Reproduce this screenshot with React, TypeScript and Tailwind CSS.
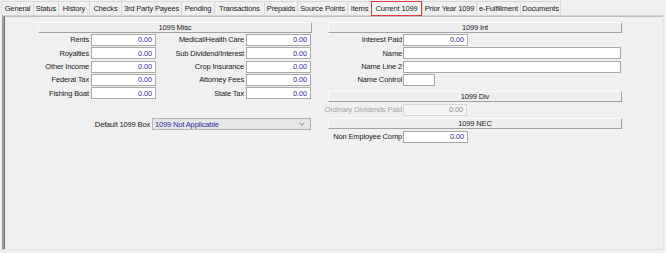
import React from 'react';

interface Tab {
  label: string;
  w: number;
  active?: boolean;
}

const tabs: Tab[] = [
  { label: 'General', w: 32 },
  { label: 'Status', w: 25 },
  { label: 'History', w: 31 },
  { label: 'Checks', w: 32 },
  { label: '3rd Party Payees', w: 60 },
  { label: 'Pending', w: 33 },
  { label: 'Transactions', w: 50 },
  { label: 'Prepaids', w: 33 },
  { label: 'Source Points', w: 50 },
  { label: 'Items', w: 24 },
  { label: 'Current 1099', w: 51, active: true },
  { label: 'Prior Year 1099', w: 54 },
  { label: 'e-Fulfillment', w: 44 },
  { label: 'Documents', w: 41 },
];

const miscRows: [string, string][] = [
  ['Rents', 'Medical/Health Care'],
  ['Royalties', 'Sub Dividend/Interest'],
  ['Other Income', 'Crop Insurance'],
  ['Federal Tax', 'Attorney Fees'],
  ['Fishing Boat', 'State Tax'],
];

function Header({ title }: { title: string }) {
  return (
    <div className="h-[11px] flex items-center justify-center bg-[#eeeeee] border border-t-[#fbfbfb] border-l-[#fbfbfb] border-r-[#a3a3a3] border-b-[#a3a3a3] text-[#1a1a1a]">
      {title}
    </div>
  );
}

function NumBox({ value = '0.00', className = 'w-[65px]' }: { value?: string; className?: string }) {
  return (
    <div className={`${className} h-[12px] bg-white border border-[#a9a9a9] flex items-center justify-end pr-[3px] text-[#2e2ea6]`}>
      {value}
    </div>
  );
}

function Label({ text, className = '' }: { text: string; className?: string }) {
  return <span className={`${className} flex justify-end whitespace-nowrap pr-[1px]`}>{text}</span>;
}

export default function App() {
  return (
    <div className="w-[666px] h-[253px] bg-[#f0f0f0] font-['Liberation_Sans',Arial,sans-serif] text-[7.5px] leading-none tracking-[-0.15px] text-[#1a1a1a] overflow-hidden">
      {/* tab strip */}
      <div className="flex h-[15px] items-end pl-[1px]">
        {tabs.map((t) =>
          t.active ? (
            <div
              key={t.label}
              style={{ width: t.w }}
              className="h-[15px] -mb-[1px] relative z-10 flex items-center justify-center bg-[#f7f7f7] border border-[#e0393e]"
            >
              {t.label}
            </div>
          ) : (
            <div
              key={t.label}
              style={{ width: t.w }}
              className="h-[14px] flex items-center justify-center bg-[#f0f0f0] border-t border-l border-[#d9d9d9] last:border-r"
            >
              {t.label}
            </div>
          )
        )}
      </div>

      {/* panel */}
      <div className="mx-[2px] h-[235px] border-t border-[#d4d4d4] border-r border-r-[#e3e3e3] border-b border-b-[#e3e3e3] border-l-2 border-l-[#a0a0a0]">
        <div className="h-full border-l border-[#6d6d6d] border-t border-t-[#bdbdbd] flex gap-[16px] pl-[33px] pt-[5px]">
          {/* 1099 Misc */}
          <div className="w-[274px] flex flex-col">
            <Header title="1099 Misc" />
            <div className="mt-[1px] flex flex-col gap-[1.33px]">
              {miscRows.map(([a, b]) => (
                <div key={a} className="flex items-center h-[12px]">
                  <Label text={a} className="w-[52px]" />
                  <div className="ml-[1px]">
                    <NumBox />
                  </div>
                  <Label text={b} className="w-[89px]" />
                  <div className="ml-[1px]">
                    <NumBox />
                  </div>
                </div>
              ))}
            </div>
            <div className="mt-[19px] flex items-center h-[12px]">
              <Label text="Default 1099 Box" className="w-[113px]" />
              <div className="ml-[1px] w-[159px] h-[12px] bg-[#e6e6e6] border border-[#b4b4b4] flex items-center pl-[2px] pr-[5px] text-[#2e2ea6]">
                <span className="flex-1">1099 Not Applicable</span>
                <svg width="6" height="4" viewBox="0 0 6 4" fill="none">
                  <path d="M0.5 0.8 L3 3.2 L5.5 0.8" stroke="#6a6a6a" strokeWidth="0.8" />
                </svg>
              </div>
            </div>
          </div>

          {/* right column */}
          <div className="w-[294px] flex flex-col">
            <Header title="1099 Int" />
            <div className="mt-[1px] flex flex-col gap-[1.33px]">
              <div className="flex items-center h-[12px]">
                <Label text="Interest Paid" className="w-[75px]" />
                <NumBox />
              </div>
              <div className="flex items-center h-[12px]">
                <Label text="Name" className="w-[75px]" />
                <NumBox value="" className="w-[218px]" />
              </div>
              <div className="flex items-center h-[12px]">
                <Label text="Name Line 2" className="w-[75px]" />
                <NumBox value="" className="w-[218px]" />
              </div>
              <div className="flex items-center h-[12px]">
                <Label text="Name Control" className="w-[75px]" />
                <NumBox value="" className="w-[32px]" />
              </div>
            </div>
            <div className="mt-[5px]">
              <Header title="1099 Div" />
            </div>
            <div className="mt-[2px] flex items-center h-[12px]">
              <Label text="Ordinary Dividends Paid" className="w-[75px] text-[#a6a6a6]" />
              <div className="w-[64px] h-[12px] bg-[#f4f4f4] border border-[#d5d5d5] flex items-center justify-end pr-[3px] text-[#8c8c8c]">
                0.00
              </div>
            </div>
            <div className="mt-[2px]">
              <Header title="1099 NEC" />
            </div>
            <div className="mt-[2px] flex items-center h-[12px]">
              <Label text="Non Employee Comp" className="w-[75px]" />
              <NumBox />
            </div>
          </div>
        </div>
      </div>
    </div>
  );
}
